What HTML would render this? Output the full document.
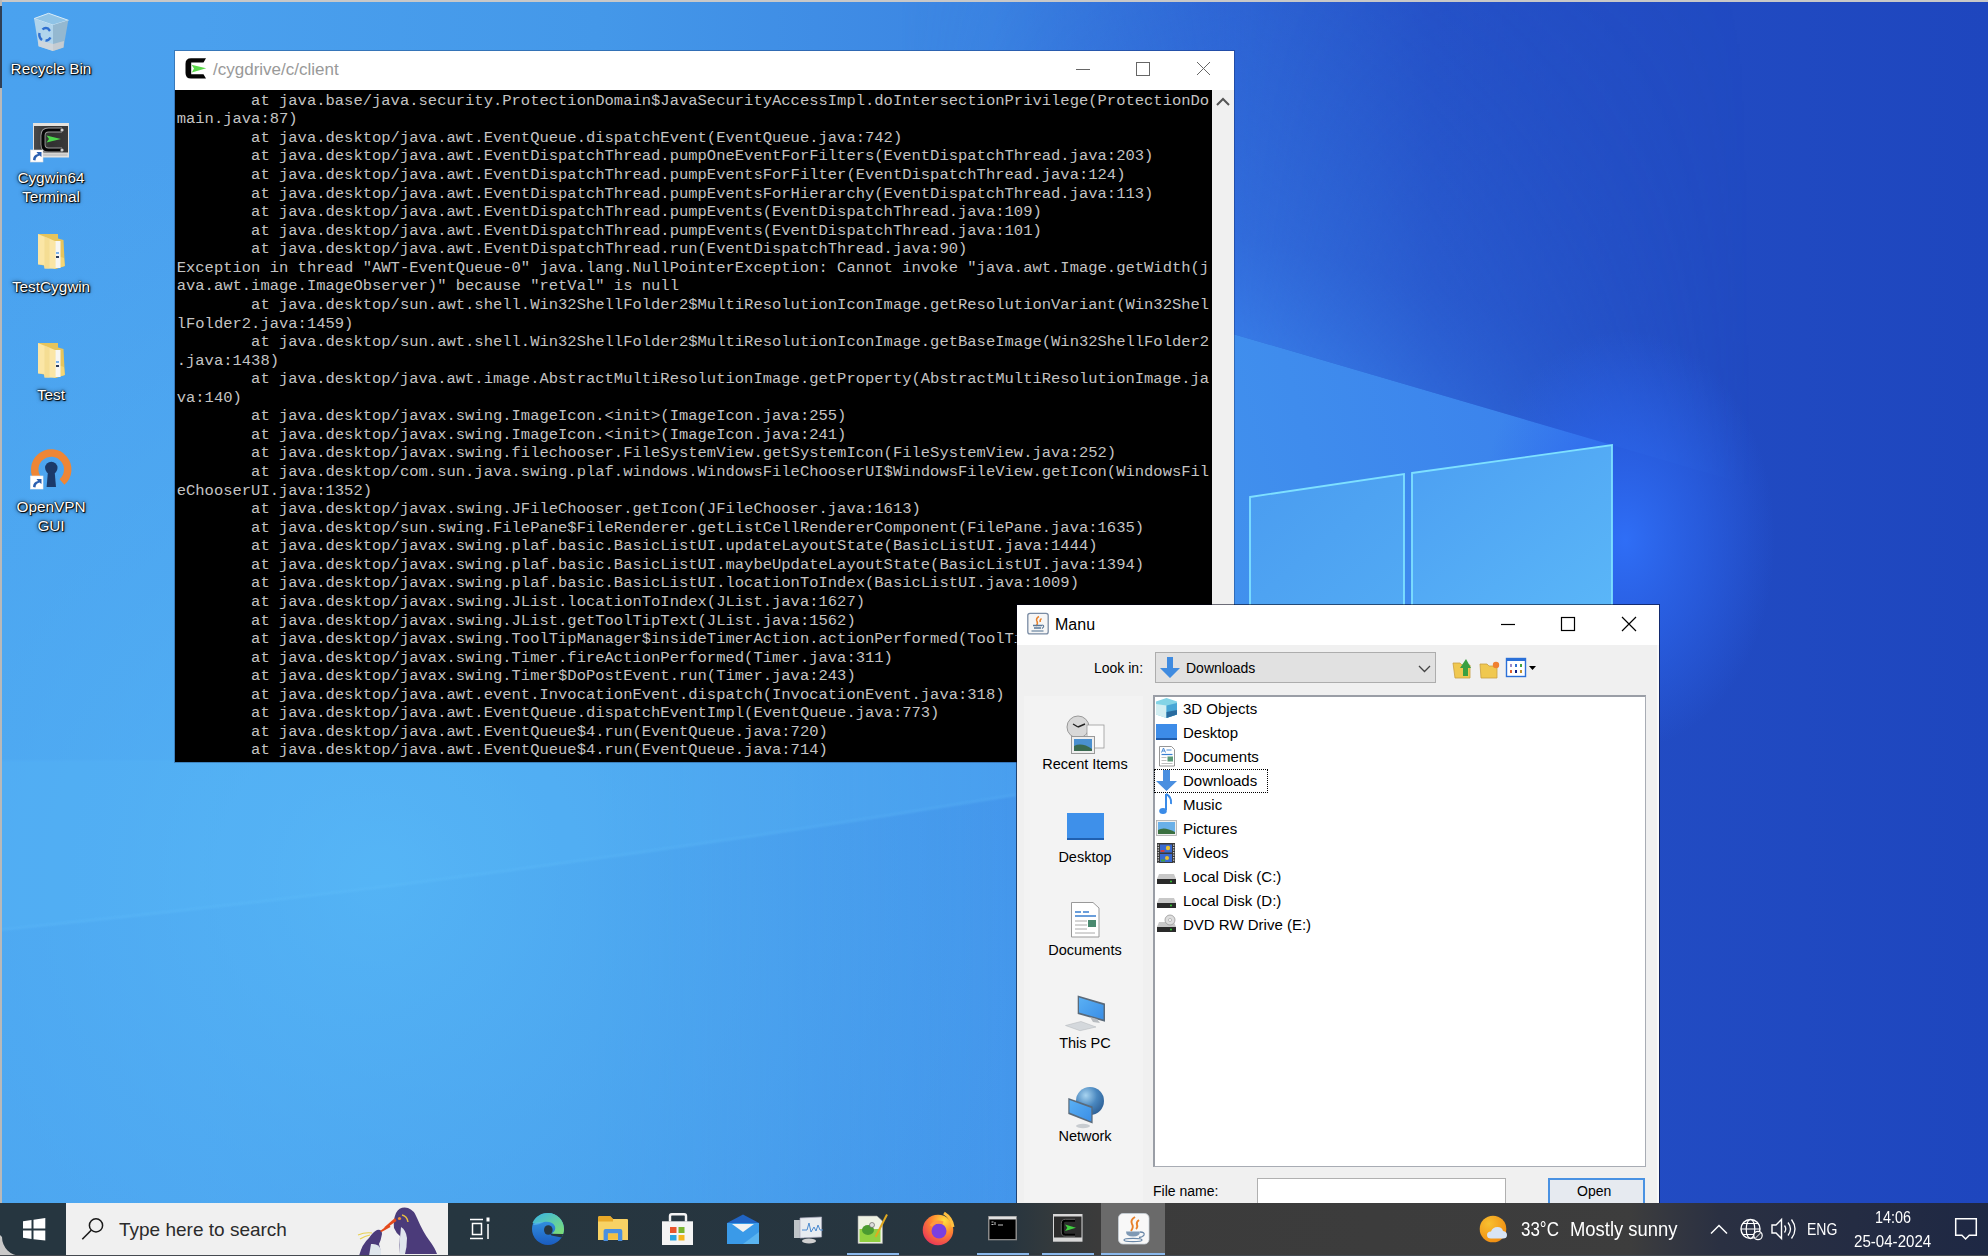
<!DOCTYPE html><html><head><meta charset="utf-8"><style>
*{margin:0;padding:0;box-sizing:border-box}
html,body{width:1988px;height:1256px;overflow:hidden;background:#3a80e2}
body{position:relative;font-family:"Liberation Sans",sans-serif}
.a{position:absolute}
svg{position:absolute;overflow:visible}
#term pre{position:absolute;left:176.7px;top:91.8px;font-family:"Liberation Mono",monospace;font-size:15.5px;line-height:18.57px;color:#c4c4c4;white-space:pre}
.dl{position:absolute;color:#fff;font-size:15.3px;line-height:19px;white-space:nowrap;text-align:center;width:110px;left:-4px;
 text-shadow:0 0 1px #000,1px 1px 1px #000,0 0 2px #000,0 0 4px rgba(0,0,0,.7)}
.t{position:absolute;white-space:nowrap;line-height:1}
.li{position:absolute;left:1183px;font-size:15px;color:#000;white-space:nowrap;line-height:1}
.pl{position:absolute;font-size:14.5px;color:#000;white-space:nowrap;text-align:center;width:120px;left:1025px;line-height:1}
</style></head><body>
<svg class="a" style="left:0;top:0" width="1988" height="1256">
<defs>
<filter id="b2"><feGaussianBlur stdDeviation="1.2"/></filter>
<linearGradient id="g1" gradientUnits="userSpaceOnUse" x1="0" y1="0" x2="1988" y2="0">
<stop offset="0" stop-color="#4aa2ef"/>
<stop offset="0.10" stop-color="#4aa0ee"/>
<stop offset="0.30" stop-color="#4498e9"/>
<stop offset="0.50" stop-color="#3b84e2"/>
<stop offset="0.62" stop-color="#2d62d2"/>
<stop offset="0.72" stop-color="#244fc6"/>
<stop offset="1" stop-color="#1e46be"/>
</linearGradient>
<linearGradient id="beam" x1="1612" y1="445" x2="0" y2="900" gradientUnits="userSpaceOnUse">
<stop offset="0" stop-color="#3a80ec"/>
<stop offset="0.35" stop-color="#4498ee"/>
<stop offset="1" stop-color="#52b2f4"/>
</linearGradient>
<linearGradient id="bmg" gradientUnits="userSpaceOnUse" x1="0" y1="0" x2="1988" y2="0">
<stop offset="0" stop-color="#fff" stop-opacity="0.0"/>
<stop offset="0.30" stop-color="#fff" stop-opacity="0.0"/>
<stop offset="0.55" stop-color="#fff" stop-opacity="0.8"/>
<stop offset="0.62" stop-color="#fff" stop-opacity="1"/>
</linearGradient>
<mask id="bm" maskUnits="userSpaceOnUse" x="0" y="0" width="1988" height="1256"><rect width="1988" height="1256" fill="url(#bmg)"/></mask>
<linearGradient id="halo" gradientUnits="userSpaceOnUse" x1="1230" y1="333" x2="1370" y2="-147">
<stop offset="0" stop-color="#3a80ea" stop-opacity="0.8"/>
<stop offset="0.2" stop-color="#3574e2" stop-opacity="0.55"/>
<stop offset="0.6" stop-color="#3070de" stop-opacity="0.25"/>
<stop offset="1" stop-color="#2f6ad8" stop-opacity="0"/>
</linearGradient>
<linearGradient id="hmg" gradientUnits="userSpaceOnUse" x1="900" y1="0" x2="1750" y2="0">
<stop offset="0" stop-color="#fff" stop-opacity="0"/>
<stop offset="0.39" stop-color="#fff" stop-opacity="1"/>
<stop offset="0.76" stop-color="#fff" stop-opacity="0.35"/>
<stop offset="1" stop-color="#fff" stop-opacity="0"/>
</linearGradient>
<mask id="hm" maskUnits="userSpaceOnUse" x="0" y="0" width="1988" height="1256"><rect width="1988" height="1256" fill="url(#hmg)"/></mask>
<radialGradient id="glow" cx="0.5" cy="0.5" r="0.5">
<stop offset="0" stop-color="#2f6ef6" stop-opacity="1"/>
<stop offset="0.5" stop-color="#2c66ee" stop-opacity="0.6"/>
<stop offset="1" stop-color="#2c66ee" stop-opacity="0"/>
</radialGradient>
<radialGradient id="bl" cx="380" cy="880" r="760" gradientUnits="userSpaceOnUse">
<stop offset="0" stop-color="#58bbf8" stop-opacity="0.75"/>
<stop offset="0.6" stop-color="#52b0f4" stop-opacity="0.4"/>
<stop offset="1" stop-color="#52b0f4" stop-opacity="0"/>
</radialGradient>
<linearGradient id="pan1" x1="0" y1="0" x2="1" y2="1"><stop offset="0" stop-color="#4a9cf0"/><stop offset="1" stop-color="#52aaf4"/></linearGradient>
<linearGradient id="pan2" x1="0" y1="0" x2="1" y2="1"><stop offset="0" stop-color="#4c9ff2"/><stop offset="1" stop-color="#5ab6f8"/></linearGradient>
</defs>
<rect width="1988" height="1256" fill="url(#g1)"/>
<polygon points="1612,445 -300,-115 -300,-600 1800,-600 1800,500" fill="url(#halo)" mask="url(#hm)"/>
<polygon points="1612,445 -300,-115 -300,1500 1612,1500" fill="url(#beam)" mask="url(#bm)"/>
<rect width="1988" height="1256" fill="url(#bl)"/>
<path d="M0,930 Q500,880 1016,795 L1016,760 L0,760 Z" fill="#5cbcfa" opacity="0.22" filter="url(#b2)"/>
<path d="M0,930 Q500,880 1016,795" stroke="#70ccff" stroke-width="2.5" fill="none" opacity="0.18" filter="url(#b2)"/>
<ellipse cx="1625" cy="540" rx="150" ry="210" fill="url(#glow)"/>
<polygon points="1250,497 1404,474 1404,606 1250,606" fill="url(#pan1)" stroke="#7ee0ff" stroke-width="1.8"/>
<polygon points="1412,473 1612,445 1612,606 1412,606" fill="url(#pan2)" stroke="#7ee0ff" stroke-width="1.8"/>
</svg>
<div class="a" style="left:0;top:0;width:1988px;height:2px;background:#c8c8c8"></div>
<div class="a" style="left:0;top:0;width:2px;height:1256px;background:#b9b9b9"></div>
<div class="a" style="left:0;top:6px;width:2px;height:82px;background:#2f3f55"></div>
<svg style="left:0;top:0" width="100" height="60">
<polygon points="34,18.6 48.6,13.3 68.3,20.3 53,25.1" fill="#8fc3e6" stroke="#d8ecf8" stroke-width="1"/>
<polygon points="34,18.6 53,25.1 53,51 38.6,46.2" fill="#b0d4ec"/>
<polygon points="53,25.1 68.3,20.3 63.5,47.5 53,51" fill="#94b8d0"/>
<polygon points="38,40 53,44 53,51 38.6,46.2" fill="#cfd6dc"/>
<polygon points="53,44 64,41 63.5,47.5 53,51" fill="#c5ccd2"/>
<path d="M42.5,29.5 q2.5,-2.5 5.5,-1 l2,2.5" stroke="#2f6fd0" stroke-width="2.4" fill="none"/>
<path d="M39.5,33 q-1,4 2.5,7" stroke="#2f6fd0" stroke-width="2.4" fill="none"/>
<path d="M45.5,40.5 q3,0.5 5,-3" stroke="#2f6fd0" stroke-width="2.4" fill="none"/>
</svg>
<div class="dl" style="top:59px">Recycle Bin</div>
<svg style="left:0;top:100" width="100" height="70">
<defs><linearGradient id="cyb" x1="0" y1="0" x2="1" y2="0"><stop offset="0" stop-color="#4a4a4a"/><stop offset="0.5" stop-color="#303030"/><stop offset="1" stop-color="#3a3a3a"/></linearGradient></defs>
<rect x="33" y="23" width="36" height="34.5" fill="#e4e2de"/>
<rect x="34" y="26" width="34" height="26.5" fill="url(#cyb)"/>
<rect x="34.5" y="53.5" width="33" height="2.5" fill="#c8c8c8"/>
<path d="M62,30 h-13.5 q-5.5,0 -5.5,5.5 v9 q0,5.5 5.5,5.5 h13.5" stroke="#9a9a9a" stroke-width="5" fill="none"/>
<path d="M62,30 h-13.5 q-5.5,0 -5.5,5.5 v9 q0,5.5 5.5,5.5 h13.5" stroke="#050505" stroke-width="3.2" fill="none"/>
<circle cx="62" cy="30" r="1.6" fill="#cfcfcf"/><circle cx="62" cy="50" r="1.6" fill="#cfcfcf"/>
<polygon points="46.5,35.5 61,39 46.5,42.5 49,39" fill="#4cd64c"/>
<rect x="30.5" y="50" width="12.5" height="12" fill="#fff" stroke="#ddd" stroke-width="0.6"/>
<path d="M33,60 q0,-5 5,-6 l-1.5,-2 h5 v5 l-2,-1.5 q-4,1 -4,5z" fill="#2a5fb0"/>
</svg>
<div class="dl" style="top:168px">Cygwin64<br>Terminal</div>
<svg style="left:0;top:0px" width="100" height="280">
<polygon points="38,234 58,234 58,238.5 63.5,240 64.8,266 56,269 38,264" fill="#e6c45c"/>
<polygon points="58,256 64,258 64.8,266 58,268" fill="#f4d676"/>
<rect x="55" y="241" width="5.5" height="27" fill="#f6f6f4"/>
<rect x="56" y="252" width="3" height="2" fill="#7ab0e8"/><rect x="56" y="256" width="3" height="2" fill="#2a3a5a"/>
<polygon points="38,234 55.6,241.2 55.6,268.8 44.5,268.5 44,265 38,264.4" fill="#fbe6a6"/>
<polygon points="44.5,236.5 49.5,238.5 49.5,268.6 44.5,268.5" fill="#f2d98c" opacity="0.7"/>
</svg>
<svg style="left:0;top:109px" width="100" height="280">
<polygon points="38,234 58,234 58,238.5 63.5,240 64.8,266 56,269 38,264" fill="#e6c45c"/>
<polygon points="58,256 64,258 64.8,266 58,268" fill="#f4d676"/>
<rect x="55" y="241" width="5.5" height="27" fill="#f6f6f4"/>
<rect x="56" y="252" width="3" height="2" fill="#7ab0e8"/><rect x="56" y="256" width="3" height="2" fill="#2a3a5a"/>
<polygon points="38,234 55.6,241.2 55.6,268.8 44.5,268.5 44,265 38,264.4" fill="#fbe6a6"/>
<polygon points="44.5,236.5 49.5,238.5 49.5,268.6 44.5,268.5" fill="#f2d98c" opacity="0.7"/>
</svg>
<div class="dl" style="top:277px">TestCygwin</div>
<div class="dl" style="top:385px">Test</div>
<svg style="left:0;top:0" width="100" height="500">
<path d="M38.5,480 A16.5,16.5 0 1 1 62,482" stroke="#ee8636" stroke-width="7.5" fill="none"/>
<circle cx="51.3" cy="468" r="6.2" fill="#1b3a6a"/>
<polygon points="48,471 54.6,471 56,487 46.6,487" fill="#1b3a6a"/>
<rect x="30.5" y="476" width="12.5" height="13" fill="#fff" stroke="#eee" stroke-width="0.6"/>
<path d="M33,487 q0,-5 5,-6 l-1.5,-2 h5 v5 l-2,-1.5 q-4,1 -4,5z" fill="#2a5fb0"/>
</svg>
<div class="dl" style="top:497px">OpenVPN<br>GUI</div>
<div id="term">
<div class="a" style="left:174px;top:50px;width:1061px;height:713px;background:rgba(0,0,30,.25)"></div>
<div class="a" style="left:175px;top:51px;width:1059px;height:39px;background:#fff"></div>
<div class="a" style="left:175px;top:90px;width:1037px;height:672px;background:#000"></div>
<div class="a" style="left:1212px;top:90px;width:22px;height:672px;background:#f0f0f0"></div>
<pre>        at java.base/java.security.ProtectionDomain$JavaSecurityAccessImpl.doIntersectionPrivilege(ProtectionDo
main.java:87)
        at java.desktop/java.awt.EventQueue.dispatchEvent(EventQueue.java:742)
        at java.desktop/java.awt.EventDispatchThread.pumpOneEventForFilters(EventDispatchThread.java:203)
        at java.desktop/java.awt.EventDispatchThread.pumpEventsForFilter(EventDispatchThread.java:124)
        at java.desktop/java.awt.EventDispatchThread.pumpEventsForHierarchy(EventDispatchThread.java:113)
        at java.desktop/java.awt.EventDispatchThread.pumpEvents(EventDispatchThread.java:109)
        at java.desktop/java.awt.EventDispatchThread.pumpEvents(EventDispatchThread.java:101)
        at java.desktop/java.awt.EventDispatchThread.run(EventDispatchThread.java:90)
Exception in thread &quot;AWT-EventQueue-0&quot; java.lang.NullPointerException: Cannot invoke &quot;java.awt.Image.getWidth(j
ava.awt.image.ImageObserver)&quot; because &quot;retVal&quot; is null
        at java.desktop/sun.awt.shell.Win32ShellFolder2$MultiResolutionIconImage.getResolutionVariant(Win32Shel
lFolder2.java:1459)
        at java.desktop/sun.awt.shell.Win32ShellFolder2$MultiResolutionIconImage.getBaseImage(Win32ShellFolder2
.java:1438)
        at java.desktop/java.awt.image.AbstractMultiResolutionImage.getProperty(AbstractMultiResolutionImage.ja
va:140)
        at java.desktop/javax.swing.ImageIcon.&lt;init&gt;(ImageIcon.java:255)
        at java.desktop/javax.swing.ImageIcon.&lt;init&gt;(ImageIcon.java:241)
        at java.desktop/javax.swing.filechooser.FileSystemView.getSystemIcon(FileSystemView.java:252)
        at java.desktop/com.sun.java.swing.plaf.windows.WindowsFileChooserUI$WindowsFileView.getIcon(WindowsFil
eChooserUI.java:1352)
        at java.desktop/javax.swing.JFileChooser.getIcon(JFileChooser.java:1613)
        at java.desktop/sun.swing.FilePane$FileRenderer.getListCellRendererComponent(FilePane.java:1635)
        at java.desktop/javax.swing.plaf.basic.BasicListUI.updateLayoutState(BasicListUI.java:1444)
        at java.desktop/javax.swing.plaf.basic.BasicListUI.maybeUpdateLayoutState(BasicListUI.java:1394)
        at java.desktop/javax.swing.plaf.basic.BasicListUI.locationToIndex(BasicListUI.java:1009)
        at java.desktop/javax.swing.JList.locationToIndex(JList.java:1627)
        at java.desktop/javax.swing.JList.getToolTipText(JList.java:1562)
        at java.desktop/javax.swing.ToolTipManager$insideTimerAction.actionPerformed(ToolTipManager.java:
        at java.desktop/javax.swing.Timer.fireActionPerformed(Timer.java:311)
        at java.desktop/javax.swing.Timer$DoPostEvent.run(Timer.java:243)
        at java.desktop/java.awt.event.InvocationEvent.dispatch(InvocationEvent.java:318)
        at java.desktop/java.awt.EventQueue.dispatchEventImpl(EventQueue.java:773)
        at java.desktop/java.awt.EventQueue$4.run(EventQueue.java:720)
        at java.desktop/java.awt.EventQueue$4.run(EventQueue.java:714)</pre>
</div>
<svg style="left:0;top:0" width="1300" height="100">
<path d="M206,58.3 H191 Q185.5,58.3 185.5,63.8 V73.1 Q185.5,78.6 191,78.6 H206 L203.5,74.2 H191.2 V62.5 H203.5 Z" fill="#050505"/>
<path d="M191.5,64.8 L206.2,68.3 L191.8,72.6 L194,68.5 Z" fill="#5ad84a"/>
<line x1="1076" y1="69.5" x2="1090" y2="69.5" stroke="#666" stroke-width="1"/>
<rect x="1136.5" y="62.5" width="13" height="13" stroke="#666" stroke-width="1" fill="none"/>
<path d="M1197,62 L1210,75 M1210,62 L1197,75" stroke="#666" stroke-width="1"/>
<path d="M1217,105 l6,-6 l6,6" stroke="#555" stroke-width="2" fill="none"/>
</svg>
<div class="t" style="left:213px;top:61px;font-size:17px;color:#999">/cygdrive/c/client</div>
<div class="a" style="left:1016px;top:604px;width:644px;height:600px;background:rgba(0,0,20,.55)"></div>
<div class="a" style="left:1017px;top:605px;width:642px;height:40px;background:#fff"></div>
<div class="a" style="left:1017px;top:645px;width:642px;height:560px;background:#f0f0f0;border-right:2px solid #f8f8f8"></div>
<div class="a" style="left:1024px;top:696px;width:119px;height:506px;background:#f3f3f3"></div>
<svg style="left:0;top:0" width="1700" height="1256">
<rect x="1027.8" y="613.3" width="20.4" height="20.6" rx="2.2" fill="#f6f6f6" stroke="#7a8ca4" stroke-width="1.3"/>
<path d="M1039,616.5 q-3.5,2 -2,5 q1.2,2 -0.8,4.5 M1041.5,618.5 q-2,1.5 -1.2,3.5" stroke="#e8802a" stroke-width="1.5" fill="none"/>
<path d="M1033,625.5 h9 M1034,628 h7" stroke="#5a7898" stroke-width="1.3"/>
<path d="M1042,625 q3.5,0.5 0,3.5" stroke="#5a7898" stroke-width="1.1" fill="none"/>
<path d="M1031.5,631 h12" stroke="#5a7898" stroke-width="1.1"/>
<line x1="1501" y1="624.5" x2="1515" y2="624.5" stroke="#000" stroke-width="1.2"/>
<rect x="1561.5" y="617.5" width="13" height="13" stroke="#000" stroke-width="1.2" fill="none"/>
<path d="M1622,617 L1636,631 M1636,617 L1622,631" stroke="#000" stroke-width="1.2"/>
</svg>
<div class="t" style="left:1055px;top:616.5px;font-size:16px;color:#000">Manu</div>
<div class="t" style="left:1094px;top:661px;font-size:14px;color:#000">Look in:</div>
<div class="a" style="left:1155px;top:652px;width:281px;height:31px;background:#e1e1e1;border:1px solid #adadad"></div>
<div class="t" style="left:1186px;top:661px;font-size:14px;color:#000">Downloads</div>
<svg style="left:0;top:0" width="1700" height="1256">
<polygon points="1167,657 1173,657 1173,668 1180,668 1170,678 1160,668 1167,668" fill="#3f8be0"/>
<path d="M1419,666 l5.5,5.5 l5.5,-5.5" stroke="#444" stroke-width="1.3" fill="none"/>
<!-- up folder -->
<polygon points="1453,663 1460,663 1462,665 1470,665 1470,678 1455,678" fill="#f0c850" stroke="#c9a040" stroke-width="0.8"/>
<polygon points="1463,676 1463,668 1460,668 1466,659 1471,668 1468,668 1468,676" fill="#3aa040"/>
<!-- new folder -->
<polygon points="1480,664 1487,664 1489,666 1497,666 1497,678 1481,678" fill="#f0c850" stroke="#c9a040" stroke-width="0.8"/>
<circle cx="1496" cy="665" r="3.2" fill="#f08030"/>
<!-- view menu -->
<rect x="1506.5" y="658.5" width="19" height="18" fill="#fff" stroke="#2b70d8" stroke-width="1.4"/>
<rect x="1506" y="658" width="20" height="3" fill="#2b70d8"/>
<rect x="1510" y="664" width="2" height="3" fill="#9a8ac8"/><rect x="1515" y="664" width="2" height="3" fill="#3070d0"/><rect x="1520" y="664" width="2" height="3" fill="#40a040"/>
<rect x="1510" y="670" width="2" height="3" fill="#e06030"/><rect x="1515" y="670" width="2" height="3" fill="#102080"/><rect x="1520" y="670" width="2" height="3" fill="#c09030"/>
<polygon points="1529,666 1536,666 1532.5,670" fill="#000"/>
</svg>
<div class="a" style="left:1153px;top:695px;width:493px;height:472px;background:#fff;border:1px solid #a8acb4;border-top:2px solid #9a9ea6;border-left:2px solid #9a9ea6"></div>
<div class="li" style="top:701.4px">3D Objects</div>
<div class="li" style="top:725.4px">Desktop</div>
<div class="li" style="top:749.4px">Documents</div>
<div class="li" style="top:773.4px">Downloads</div>
<div class="li" style="top:797.4px">Music</div>
<div class="li" style="top:821.4px">Pictures</div>
<div class="li" style="top:845.4px">Videos</div>
<div class="li" style="top:869.4px">Local Disk (C:)</div>
<div class="li" style="top:893.4px">Local Disk (D:)</div>
<div class="li" style="top:917.4px">DVD RW Drive (E:)</div>
<div class="a" style="left:1154px;top:769px;width:114px;height:24px;border:1px dotted #000"></div>
<svg style="left:0;top:0" width="1700" height="1256">
<!-- 3D objects -->
<polygon points="1156,701.5 1166.5,698 1177,701.5 1177,714.5 1166.5,718 1156,714.5" fill="#84d4e6"/>
<polygon points="1156,704 1166.5,705.5 1166.5,718 1156,714.5" fill="#d2eef2"/>
<polygon points="1166.5,705.5 1177,703 1177,714.5 1166.5,718" fill="#48a6d6"/>
<polygon points="1166.5,712 1177,710 1177,714.5 1166.5,718" fill="#2a6ca0"/>
<!-- desktop -->
<rect x="1156" y="724" width="21" height="16" fill="#3d8ce8"/>
<rect x="1156" y="738" width="21" height="2" fill="#1e5aa8"/>
<!-- documents -->
<polygon points="1159.5,746.5 1171.5,746.5 1174.5,749.5 1174.5,766 1159.5,766" fill="#fff" stroke="#8a8a8a" stroke-width="0.9"/>
<path d="M1161.5,752.5 l2,-4.5 l2,4.5 M1162.3,751 h2.5 M1166.5,750 h5" stroke="#3a7fd0" stroke-width="0.9" fill="none"/>
<path d="M1161.5,754.5 h11" stroke="#3a7fd0" stroke-width="1.2"/>
<path d="M1161.5,757.5 h5 M1161.5,760.5 h5 M1161.5,763.5 h11" stroke="#b8b8b8" stroke-width="0.9"/>
<rect x="1167.5" y="756.5" width="5.5" height="5" fill="#5a9a78"/>
<!-- downloads -->
<polygon points="1163,770 1170,770 1170,781 1177,781 1166.5,791 1156,781 1163,781" fill="#4a8fe0"/>
<!-- music -->
<path d="M1166,794 v16" stroke="#3a8be8" stroke-width="2"/>
<ellipse cx="1163" cy="811" rx="3.8" ry="3" fill="#3a8be8"/>
<path d="M1166,794 q6,3 5,10" stroke="#3a8be8" stroke-width="2" fill="none"/>
<!-- pictures -->
<rect x="1156.5" y="820.5" width="20" height="15" fill="#eee" stroke="#aaa" stroke-width="0.8"/>
<rect x="1158" y="822" width="17" height="12" fill="#6ab0e8"/>
<path d="M1158,830 q6,-4 17,2 v2 h-17z" fill="#3a7040"/>
<!-- videos -->
<rect x="1157" y="843" width="18" height="20" fill="#3a3a3a"/>
<path d="M1158.3,844.5 v18 M1173.7,844.5 v18" stroke="#ddd" stroke-width="1.2" stroke-dasharray="1.2,1.3"/>
<rect x="1160" y="844.5" width="12" height="8" fill="#3a6ad0"/>
<rect x="1160" y="854" width="12" height="8" fill="#3a6ad0"/>
<circle cx="1168" cy="848" r="2.2" fill="#e8c030"/><rect x="1160.5" y="850" width="4" height="2" fill="#d04040"/>
<circle cx="1167" cy="858" r="2" fill="#e8c030"/><rect x="1161" y="859.5" width="4" height="2" fill="#40a040"/>
</svg>
<svg style="left:0;top:0" width="1700" height="1256">
<polygon points="1159,874 1174,874 1176,879 1157,879" fill="#c8c8c8"/>
<rect x="1157" y="879" width="19" height="5" fill="#2a2a2a"/>
<circle cx="1171" cy="881.5" r="1" fill="#3c3"/>
</svg>
<svg style="left:0;top:0" width="1700" height="1256">
<polygon points="1159,898 1174,898 1176,903 1157,903" fill="#c8c8c8"/>
<rect x="1157" y="903" width="19" height="5" fill="#2a2a2a"/>
<circle cx="1171" cy="905.5" r="1" fill="#3c3"/>
</svg>
<svg style="left:0;top:0" width="1700" height="1256">
<polygon points="1159,922 1174,922 1176,927 1157,927" fill="#c8c8c8"/>
<rect x="1157" y="927" width="19" height="5" fill="#2a2a2a"/>
<circle cx="1171" cy="929.5" r="1" fill="#3c3"/>
</svg>
<svg style="left:0;top:0" width="1700" height="1256"><circle cx="1170" cy="920" r="5" fill="#ddd" stroke="#999" stroke-width="0.8"/><circle cx="1170" cy="920" r="1.5" fill="#fff" stroke="#999" stroke-width="0.6"/></svg>
<div class="pl" style="top:757px">Recent Items</div>
<div class="pl" style="top:849.7px">Desktop</div>
<div class="pl" style="top:943.3px">Documents</div>
<div class="pl" style="top:1036.1px">This PC</div>
<div class="pl" style="top:1129.2px">Network</div>
<svg style="left:0;top:0" width="1700" height="1256">
<!-- recent -->
<circle cx="1078" cy="727" r="11" fill="#d8d8d8" stroke="#999" stroke-width="1"/>
<path d="M1078,727 l-5,-3 M1078,727 l7,-3" stroke="#222" stroke-width="1.4"/>
<rect x="1087" y="725" width="17" height="23" fill="#fafafa" stroke="#999" stroke-width="0.8"/>
<rect x="1071.5" y="736.5" width="23" height="17" fill="#eee" stroke="#999" stroke-width="1"/>
<rect x="1074" y="739" width="18" height="12" fill="#4a90d0"/>
<path d="M1074,746 q8,-4 18,3 v2 h-18z" fill="#3a6a50"/>
<!-- desktop -->
<rect x="1067" y="813" width="37" height="27" fill="#3e90ea"/>
<rect x="1067" y="838" width="37" height="2" fill="#2060b0"/>
<!-- documents -->
<polygon points="1071.5,902.5 1093,902.5 1099,908 1099,937 1071.5,937" fill="#fff" stroke="#999" stroke-width="1"/>
<path d="M1075,912 h6 M1083,912 h6 M1075,916 h21" stroke="#3a7fd0" stroke-width="1.3"/>
<path d="M1075,921 h12 M1075,925 h12 M1075,929 h12 M1075,933 h20" stroke="#aaa" stroke-width="1"/>
<rect x="1088" y="920" width="8" height="7" fill="#4a8a70"/>
<!-- this pc -->
<defs><linearGradient id="scr" x1="0" y1="0" x2="1" y2="1"><stop offset="0" stop-color="#5ab0f4"/><stop offset="1" stop-color="#3a8ee6"/></linearGradient>
<radialGradient id="glb" cx="0.35" cy="0.3" r="0.8"><stop offset="0" stop-color="#a8d4f0"/><stop offset="0.5" stop-color="#4a88c0"/><stop offset="1" stop-color="#2a5a90"/></radialGradient></defs>
<polygon points="1077.7,995.4 1105,1003.6 1105,1021.7 1077.7,1014" fill="#5a6a7a"/>
<polygon points="1079,997.5 1103.5,1005 1103.5,1019.5 1079,1012.5" fill="url(#scr)"/>
<polygon points="1090,1017 1097,1019 1100,1023 1093,1022" fill="#b8bcc0"/>
<polygon points="1065.5,1025.5 1081,1021.5 1096,1027 1080,1030.7" fill="#d4d8dc" stroke="#b0b4b8" stroke-width="0.5"/>
<!-- network -->
<circle cx="1090" cy="1101" r="14" fill="url(#glb)"/>
<polygon points="1068.3,1097.9 1092.6,1106.5 1092.6,1123.5 1068.3,1114" fill="#5a6a7a"/>
<polygon points="1069.5,1100 1091.3,1108 1091.3,1121.5 1069.5,1112.5" fill="url(#scr)"/>
<ellipse cx="1083" cy="1126" rx="7" ry="2.2" fill="#c8ccd0"/>
</svg>
<div class="t" style="left:1153px;top:1184px;font-size:14px;color:#000">File name:</div>
<div class="a" style="left:1257px;top:1178px;width:249px;height:30px;background:#fff;border:1px solid #b0b0b0"></div>
<div class="a" style="left:1548px;top:1178px;width:97px;height:30px;background:#e6eaf0;border:2px solid #4a92e2"></div>
<div class="t" style="left:1577px;top:1184px;font-size:14px;color:#000">Open</div>
<div class="a" style="left:0;top:1203px;width:1988px;height:53px;background:#263640"></div>
<div class="a" style="left:448px;top:1203px;width:1240px;height:53px;background:linear-gradient(90deg,#263640 0px,#27353f 560px,#353a3c 610px,#3b3b3b 650px,#3d3d3d 1200px,#30343e 1240px)"></div>
<div class="a" style="left:1101px;top:1203px;width:64px;height:53px;background:#6a6a6a"></div>
<div class="a" style="left:1630px;top:1203px;width:358px;height:53px;background:linear-gradient(90deg,#3d3d3d 0px,#343740 40px,#2a3042 90px,#1e2844 358px)"></div>
<div class="a" style="left:66px;top:1203px;width:382px;height:53px;background:#f0f0f0"></div>
<div class="t" style="left:119px;top:1220px;font-size:19px;color:#2b2b2b">Type here to search</div>
<svg style="left:0;top:0" width="1988" height="1256">
<!-- rounded bottom-left corner mask -->
<path d="M0,1235 v21 h21 a19,19 0 0 1 -19,-19 z" fill="#c9c9c9"/>
<polygon points="23,1221.3 31.5,1220 31.5,1228.6 23,1228.6" fill="#fff"/>
<polygon points="33.5,1219.7 45.3,1218 45.3,1228.6 33.5,1228.6" fill="#fff"/>
<polygon points="23,1230.5 31.5,1230.5 31.5,1239 23,1237.7" fill="#fff"/>
<polygon points="33.5,1230.5 45.3,1230.5 45.3,1240.6 33.5,1239.3" fill="#fff"/>
<circle cx="96" cy="1225.4" r="6.6" stroke="#1a1a1a" stroke-width="1.5" fill="none"/>
<line x1="91.2" y1="1230.2" x2="82.3" y2="1239.2" stroke="#1a1a1a" stroke-width="1.6"/>
<!-- penguins -->
<path d="M396,1213 q4,-7 12,-5 q6,2 9,10 q6,14 12,22 q6,8 8,14 h-37 q-1,-10 0,-18 q-4,-3 -6,-8 q-1,-8 2,-15z" fill="#4b3b7a"/>
<path d="M401,1227 q5,3 6,11 q0,9 -2,16 h-5 q-1,-13 1,-27z" fill="#dfe6ec"/>
<path d="M395,1218 l-11,9.5 l2.5,0.5 l10,-7z" fill="#e44a1c"/>
<circle cx="399.5" cy="1218.5" r="1.6" fill="#f09030"/>
<path d="M402,1215 q5,1 6,7" stroke="#e8c040" stroke-width="1.4" fill="none"/>
<path d="M359,1256 q3,-12 10,-18 q4,-6 8,-8 q5,-1 5,4 q-1,6 -3,10 q2,6 2,12z" fill="#4b3b7a"/>
<path d="M371,1244 q8,-1 10,6 v6 h-12z" fill="#dfe6ec"/>
<path d="M380,1231 l9,-6.5 l1.5,2.5 l-9,5z" fill="#e44a1c"/>
<path d="M358,1235 q7,-3 14,-2 M360,1239 q5,-3 10,-4" stroke="#e8d050" stroke-width="1.2" fill="none"/>
<!-- task view -->
<path d="M470,1219.5 h13 M470,1238.5 h13" stroke="#fff" stroke-width="1.5"/>
<rect x="472.5" y="1223.5" width="9" height="11" stroke="#fff" stroke-width="1.5" fill="none"/>
<rect x="486.5" y="1217.5" width="3" height="4" fill="#fff"/>
<path d="M488,1224 v15" stroke="#fff" stroke-width="1.5"/>
<!-- edge -->
<defs>
<linearGradient id="eg" x1="0" y1="0" x2="1" y2="1"><stop offset="0" stop-color="#38b4e8"/><stop offset="1" stop-color="#80e070"/></linearGradient>
<linearGradient id="eb" x1="0" y1="0" x2="0" y2="1"><stop offset="0" stop-color="#3aa0e8"/><stop offset="1" stop-color="#1a5cc0"/></linearGradient>
</defs>
<circle cx="548" cy="1229" r="16" fill="url(#eb)"/>
<path d="M532.5,1223 C535.5,1216 541.5,1213 548,1213 C557,1213 564,1220 564,1229 C564,1231 563.7,1232.5 563.2,1234 C560,1235.2 555,1235 552,1233.3 C555,1231.5 556,1228.5 554.8,1226 C553,1222.5 548.5,1221.2 544,1222 C540,1222.8 536,1224.2 532.5,1223 Z" fill="url(#eg)"/>
<path d="M544,1222.5 C539,1224 535,1226 533,1224.5 C534.5,1223 539,1221 544,1222.5Z" fill="#5ac0f0" opacity="0.6"/>
<ellipse cx="548.3" cy="1230" rx="4.3" ry="4.8" fill="#263640"/>
<polygon points="550,1233.8 563.2,1234.1 561.6,1237.6 551.5,1235.6" fill="#263640"/>
<!-- explorer -->
<path d="M598,1218 q0,-2 2,-2 h10 l3,3 h14 q1,0 1,1 v20 h-30z" fill="#f8d264"/>
<path d="M598,1218 q0,-2 2,-2 h10 l3,3 v2.5 h-15z" fill="#e8a828"/>
<path d="M603.6,1241 v-10 q0,-2 2,-2 h14.7 q2,0 2,2 v10 h-4.3 v-7.5 h-10.1 v7.5z" fill="#4a90e0"/>
<rect x="608" y="1233.5" width="10" height="6" fill="#f4c040"/>
<!-- store -->
<rect x="662" y="1221.3" width="31" height="23.7" fill="#f4f4f4"/>
<path d="M670,1221.5 v-5.5 q0,-1.8 1.8,-1.8 h12.4 q1.8,0 1.8,1.8 v5.5" stroke="#f4f4f4" stroke-width="2.4" fill="none"/>
<rect x="670" y="1227" width="6.5" height="6" fill="#e8542c"/><rect x="678.5" y="1227" width="6" height="6" fill="#7ab52f"/>
<rect x="670" y="1235" width="6.5" height="5.5" fill="#2ba3e0"/><rect x="678.5" y="1235" width="6" height="5.5" fill="#f4b51e"/>
<!-- mail -->
<rect x="727" y="1223" width="32" height="21" fill="#3a9ae8"/>
<polygon points="743,1244 759,1232 759,1244" fill="#5ab4f0"/>
<polygon points="727,1223 743,1214.5 759,1223" fill="#2064c4"/>
<polygon points="732,1224 754,1224 743,1232" fill="#f2f2f2"/>
<!-- perfmon -->
<rect x="794" y="1220" width="10" height="18" fill="#bfc4c8"/>
<polygon points="800,1218 821.6,1217 821.6,1237 800,1238" fill="#e8ecf0" stroke="#aab" stroke-width="0.7"/>
<path d="M802,1230 h5 l2,-7 l2,9 l3,-5 l2,4 l2,-6 l2,5 h3" stroke="#4a8ad0" stroke-width="1" fill="none"/>
<ellipse cx="809" cy="1241" rx="7" ry="2.5" fill="#d0d0d0"/>
<!-- notepad++ -->
<polygon points="858,1216 877,1216 882.5,1221 882.5,1243.4 858,1243.4" fill="#eef2e4" stroke="#999" stroke-width="0.6"/>
<rect x="859.5" y="1229" width="21" height="13" fill="#90d040"/>
<ellipse cx="868" cy="1230" rx="6" ry="5" fill="#4a9a30"/>
<circle cx="872" cy="1225" r="2.5" fill="#ddd" stroke="#555" stroke-width="0.6"/>
<line x1="887" y1="1214.5" x2="875.5" y2="1237" stroke="#e0a820" stroke-width="2"/>
<!-- firefox -->
<defs><radialGradient id="ff" cx="0.7" cy="0.2" r="0.9"><stop offset="0" stop-color="#ffe040"/><stop offset="0.45" stop-color="#ff8a30"/><stop offset="1" stop-color="#e8305a"/></radialGradient></defs>
<circle cx="938" cy="1230" r="15.3" fill="url(#ff)"/>
<path d="M944,1213 q8,5 9,14" stroke="#ffc040" stroke-width="3" fill="none"/>
<circle cx="939" cy="1231" r="7.5" fill="#7a3fe0"/>
<path d="M931,1226 q4,-6 12,-3" stroke="#ff9a40" stroke-width="3" fill="none"/>
<!-- cmd -->
<rect x="988" y="1216" width="29" height="24.3" fill="#8a8a8a"/>
<rect x="989.5" y="1219.5" width="26" height="19.5" fill="#000"/>
<rect x="989" y="1216.6" width="27" height="2.6" fill="#e0e0e0"/>
<path d="M991.5,1222 h2 M991.5,1224.5 h2 M995,1222 v3 M998,1225 h5" stroke="#ddd" stroke-width="0.9"/>
<!-- cygwin -->
<rect x="1053" y="1214" width="29.5" height="27.7" fill="#d8d8d8"/>
<rect x="1054" y="1216.5" width="27.5" height="21" fill="#2c2c2c"/>
<path d="M1075,1220.5 h-9.5 q-3,0 -3,3 v8.5 q0,3 3,3 h9.5" stroke="#000" stroke-width="2.6" fill="none"/>
<path d="M1075,1219.3 h-9.5 q-4.2,0 -4.2,4.2 v8.5 q0,4.2 4.2,4.2 h9.5" stroke="#888" stroke-width="0.7" fill="none"/>
<polygon points="1065,1224.5 1076,1227.8 1065,1231 1067.3,1227.8" fill="#40d040"/>
<!-- java -->
<rect x="1118.5" y="1213.5" width="30.5" height="30.5" rx="4.5" fill="#f8f8f8" stroke="#c8d0d8" stroke-width="0.8"/>
<path d="M1135,1217 q-5,3 -3,7 q2,3 -1,7 M1139,1220 q-3,2 -2,5 q1,2 -1,4" stroke="#e8802a" stroke-width="1.9" fill="none"/>
<path d="M1126,1231.5 h14 q0,5 -7,5 q-7,0 -7,-5z" fill="#6a88a8" opacity="0.85"/>
<path d="M1140,1232 q5,0 4,3 q-1,2 -5,2.5" stroke="#6a88a8" stroke-width="1.3" fill="none"/>
<ellipse cx="1133" cy="1240" rx="9" ry="1.6" fill="none" stroke="#6a88a8" stroke-width="1.3"/>
<!-- indicators -->
<rect x="847" y="1253" width="52" height="3" fill="#8ab8ec"/>
<rect x="977" y="1253" width="52" height="3" fill="#8ab8ec"/>
<rect x="1042" y="1253" width="52" height="3" fill="#8ab8ec"/>
<rect x="1101" y="1253" width="64" height="3" fill="#8ab8ec"/>
<!-- weather -->
<defs><radialGradient id="sun" cx="0.35" cy="0.3" r="0.8"><stop offset="0" stop-color="#f8c030"/><stop offset="1" stop-color="#f08a10"/></radialGradient></defs>
<circle cx="1493" cy="1229" r="13.3" fill="url(#sun)"/>
<path d="M1491,1238.5 q-4,0 -4,-3.5 q0,-3.5 4,-3.5 q1.5,-4.5 6.5,-4.5 q4.5,0 5.5,4 q4,0.5 4,4 q0,3.5 -4,3.5z" fill="#d8e4f4"/>
<!-- tray -->
<path d="M1711,1233.5 l8,-8 l8,8" stroke="#fff" stroke-width="1.5" fill="none"/>
<circle cx="1750.5" cy="1229" r="9.5" stroke="#fff" stroke-width="1.4" fill="none"/>
<ellipse cx="1750.5" cy="1229" rx="4.3" ry="9.5" stroke="#fff" stroke-width="1.2" fill="none"/>
<path d="M1741,1229 h19 M1742.5,1223.5 h16 M1742.5,1234.5 h16" stroke="#fff" stroke-width="1.1"/>
<circle cx="1758" cy="1235.5" r="4.2" fill="#2a3040" stroke="#fff" stroke-width="1.2"/>
<path d="M1755.5,1238 l5,-5" stroke="#fff" stroke-width="1"/>
<path d="M1772,1225 h4 l5.5,-5.5 v19 l-5.5,-5.5 h-4z" stroke="#fff" stroke-width="1.4" fill="none"/>
<path d="M1784.5,1225.5 q2.5,3.5 0,7 M1788,1222.5 q5,6.5 0,13 M1791.5,1219.5 q7,9.5 0,19" stroke="#fff" stroke-width="1.3" fill="none"/>
<path d="M1955.7,1218.7 h20.6 v16.6 h-7 l-3.7,3.7 l-3.7,-3.7 h-6.2z" stroke="#fff" stroke-width="1.5" fill="none"/>
</svg>
<div class="t" style="left:1520.5px;top:1219.8px;font-size:19.5px;color:#fff;transform:scaleX(0.87);transform-origin:0 0">33°C</div>
<div class="t" style="left:1569.5px;top:1219.8px;font-size:19.5px;color:#fff;transform:scaleX(0.945);transform-origin:0 0">Mostly sunny</div>
<div class="t" style="left:1806.5px;top:1220.8px;font-size:16.5px;color:#fff;transform:scaleX(0.85);transform-origin:0 0">ENG</div>
<div class="t" style="left:1874.5px;top:1208.8px;font-size:16.5px;color:#fff;transform:scaleX(0.87);transform-origin:0 0">14:06</div>
<div class="t" style="left:1854px;top:1232.8px;font-size:16.5px;color:#fff;transform:scaleX(0.915);transform-origin:0 0">25-04-2024</div>
<div class="a" style="left:0;top:1255px;width:1988px;height:1px;background:#454a50"></div>
</body></html>
